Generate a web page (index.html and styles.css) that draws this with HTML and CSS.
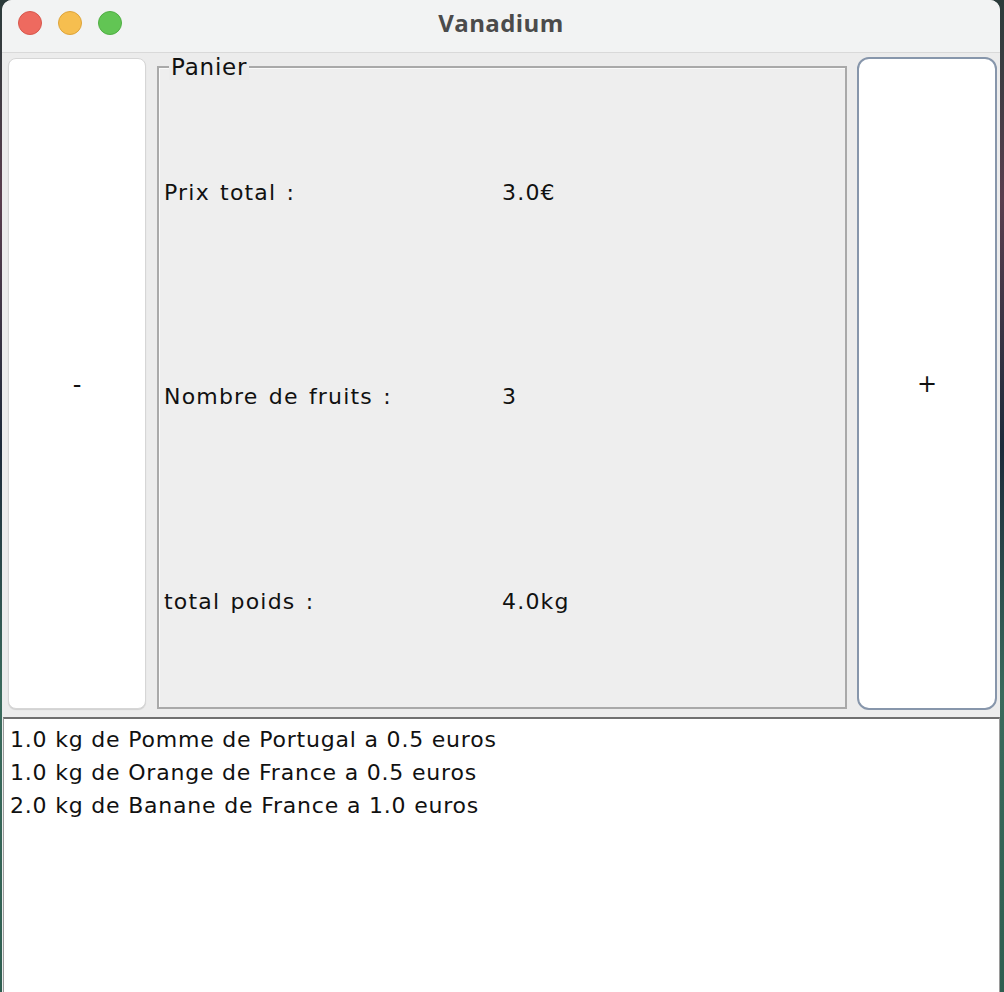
FILE: index.html
```html
<!DOCTYPE html>
<html lang="fr">
<head>
<meta charset="utf-8">
<title>Vanadium</title>
<link rel="stylesheet" href="styles.css">
</head>
<body>
<div class="desktop">
  <div class="window">
    <div class="titlebar">
      <div class="lights">
        <span class="light red"></span>
        <span class="light yellow"></span>
        <span class="light green"></span>
      </div>
      <div class="title">Vanadium</div>
    </div>
    <div class="content">
      <div class="btn minus">-</div>
      <div class="panel">
        <span class="legend">Panier</span>
        <div class="grid">
          <div class="cell">Prix total :</div>
          <div class="cell">3.0€</div>
          <div class="cell">Nombre de fruits :</div>
          <div class="cell">3</div>
          <div class="cell">total poids :</div>
          <div class="cell">4.0kg</div>
        </div>
      </div>
      <div class="btn plus">+</div>
    </div>
    <div class="list">
      <div class="line">1.0 kg de Pomme de Portugal a 0.5 euros</div>
      <div class="line">1.0 kg de Orange de France a 0.5 euros</div>
      <div class="line">2.0 kg de Banane de France a 1.0 euros</div>
    </div>
  </div>
</div>
</body>
</html>
```
FILE: styles.css
```css
html, body {
  margin: 0;
  padding: 0;
  height: 100%;
}
body {
  background: linear-gradient(180deg, #2b3b3a 0%, #5a3e4e 20%, #1d2a3a 45%, #3a6a5c 70%, #2e5e50 100%);
  font-family: "DejaVu Sans", "Liberation Sans", sans-serif;
  overflow: hidden;
}
.desktop {
  height: 992px;
  padding-left: 2px;
  padding-right: 4px;
  box-sizing: border-box;
}
.window {
  height: 992px;
  background: #ececec;
  border-radius: 10px 10px 0 0;
  overflow: hidden;
  display: flex;
  flex-direction: column;
}
.titlebar {
  height: 52px;
  flex: none;
  background: #f2f3f3;
  border-bottom: 1px solid #d9d9d9;
  position: relative;
  display: flex;
  align-items: center;
  justify-content: center;
}
.lights {
  position: absolute;
  left: 16px;
  top: 11px;
  display: flex;
  gap: 16px;
}
.light {
  width: 24px;
  height: 24px;
  border-radius: 50%;
  box-sizing: border-box;
}
.red { background: #ee6a5f; border: 1px solid #d8574c; }
.yellow { background: #f6be4f; border: 1px solid #dea43a; }
.green { background: #62c554; border: 1px solid #50ae43; }
.title {
  font-family: "Open Sans", "Liberation Sans", sans-serif;
  font-weight: 700;
  font-size: 24px;
  color: #4b4b4b;
  margin-top: -8px;
  letter-spacing: 0.4px;
}
.content {
  flex: none;
  height: 662px;
  display: flex;
  padding: 4px 2px 0 6px;
  box-sizing: border-box;
  gap: 0;
}
.btn {
  background: #ffffff;
  display: flex;
  align-items: center;
  justify-content: center;
  font-size: 24px;
  color: #111;
  box-sizing: border-box;
}
.minus {
  width: 138px;
  height: 651px;
  margin-top: 1px;
  border-radius: 8px;
  border: 1px solid #d6d6d6;
  box-shadow: 0 1px 1px rgba(0,0,0,0.12);
  padding-top: 2px;
}
.plus {
  width: 140px;
  height: 653px;
  margin-left: 10px;
  border-radius: 12px;
  border: 2px solid #8796ab;
  font-size: 24px;
}
.panel {
  position: relative;
  width: 690px;
  height: 643px;
  margin-top: 9px;
  margin-left: 11px;
  border: 2px solid #a9a9a9;
  box-shadow: inset 1px 1px 0 #fafafa;
  background: #eeeeee;
  box-sizing: border-box;
}
.legend {
  position: absolute;
  left: 10px;
  top: -14px;
  padding: 0 2px 0 2px;
  background: #ececec;
  font-size: 23px;
  line-height: 26px;
  letter-spacing: 0.8px;
  color: #111;
}
.grid {
  display: grid;
  grid-template-columns: 338px 1fr;
  grid-template-rows: repeat(3, 1fr);
  height: 614px;
  margin-top: 22px;
  padding-left: 5px;
}
.cell {
  display: flex;
  align-items: center;
  font-size: 22px;
  letter-spacing: 1.2px;
  word-spacing: 2px;
  color: #111;
}
.list {
  flex: 1;
  background: #ffffff;
  margin-top: 2px;
  margin-left: 1px;
  border-top: 2px solid #6f6f6f;
  border-left: 1px solid #9a9a9a;
  border-right: 1px solid #9a9a9a;
  padding: 4px 0 0 6px;
}
.line {
  font-size: 22px;
  line-height: 33px;
  letter-spacing: 0.8px;
  color: #111;
}
```
